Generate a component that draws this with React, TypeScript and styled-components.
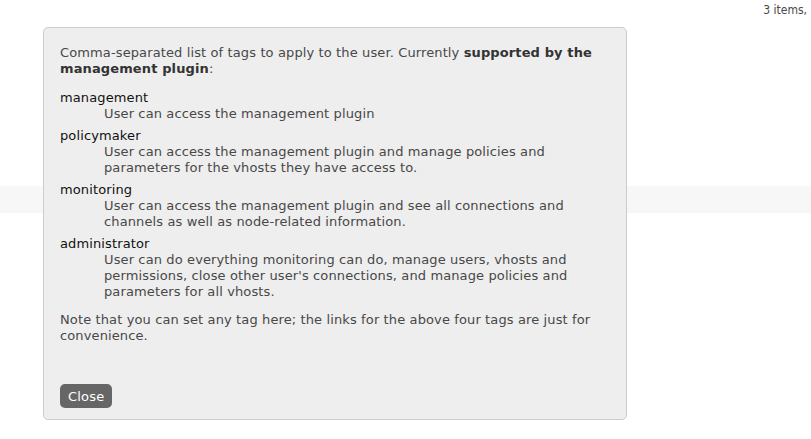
import React from "react";
import styled, { createGlobalStyle } from "styled-components";

const Global = createGlobalStyle`
  html, body { margin: 0; padding: 0; background: #fff; }
  body { font-family: "DejaVu Sans", Verdana, sans-serif; color: #484848; }
`;

const Page = styled.div`
  position: relative;
  width: 811px;
  height: 439px;
  overflow: hidden;
`;

const TopBar = styled.div`
  display: flex;
  justify-content: flex-end;
  padding-top: 3px;
  height: 20px;
  font-family: "DejaVu Sans Condensed", "DejaVu Sans", sans-serif;
  font-size: 12px;
  color: #484848;
  white-space: nowrap;
`;

const Count = styled.span`
  margin-right: 4px;
`;

const Band = styled.div`
  margin-top: 163px;
  height: 27px;
  background: #f7f7f7;
`;

const Modal = styled.div`
  position: absolute;
  left: 43px;
  top: 27px;
  width: 550px;
  height: 363px;
  padding: 17px 16px 11px 16px;
  background: #eeeeee;
  border: 1px solid #cccccc;
  border-radius: 5px;
  font-size: 13px;
  line-height: 16px;
  letter-spacing: 0.12px;
  color: #484848;
  display: flex;
  flex-direction: column;
`;

const Para = styled.p`
  margin: 0 0 13px 0;
`;

const Strong = styled.b`
  color: #333;
`;

const TagList = styled.dl`
  margin: 0 0 6px 0;
`;

const Tag = styled.dt`
  color: #111;
  margin: 0;
`;

const Desc = styled.dd`
  margin: 0 0 6px 44px;
  color: #484848;
`;

const Note = styled.p`
  margin: 0;
`;

const Footer = styled.div`
  margin-top: auto;
`;

const CloseButton = styled.button`
  height: 24px;
  padding: 0 8px;
  border: none;
  border-radius: 5px;
  background: #666666;
  color: #ffffff;
  font-family: "DejaVu Sans", Verdana, sans-serif;
  font-size: 13px;
  letter-spacing: 0.2px;
  cursor: pointer;
`;

const tags = [
  { name: "management", desc: "User can access the management plugin" },
  {
    name: "policymaker",
    desc: "User can access the management plugin and manage policies and parameters for the vhosts they have access to.",
  },
  {
    name: "monitoring",
    desc: "User can access the management plugin and see all connections and channels as well as node-related information.",
  },
  {
    name: "administrator",
    desc: "User can do everything monitoring can do, manage users, vhosts and permissions, close other user's connections, and manage policies and parameters for all vhosts.",
  },
];

export default function App() {
  return (
    <Page>
      <Global />
      <TopBar>
        <Count>3 items,</Count>
      </TopBar>
      <Band />
      <Modal>
        <Para>
          Comma-separated list of tags to apply to the user. Currently{" "}
          <Strong>supported by the management plugin</Strong>:
        </Para>
        <TagList>
          {tags.map((t) => (
            <React.Fragment key={t.name}>
              <Tag>{t.name}</Tag>
              <Desc>{t.desc}</Desc>
            </React.Fragment>
          ))}
        </TagList>
        <Note>
          Note that you can set any tag here; the links for the above four tags
          are just for convenience.
        </Note>
        <Footer>
          <CloseButton>Close</CloseButton>
        </Footer>
      </Modal>
    </Page>
  );
}
